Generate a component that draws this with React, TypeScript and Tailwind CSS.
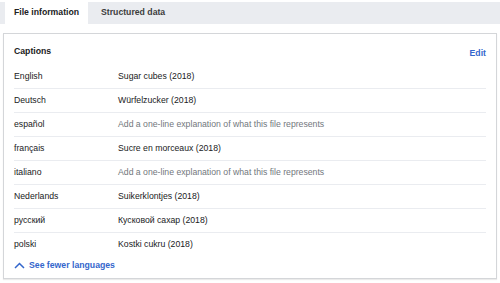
import React from "react";

const rows: { lang: string; text: string; empty?: boolean }[] = [
  { lang: "English", text: "Sugar cubes (2018)" },
  { lang: "Deutsch", text: "Würfelzucker (2018)" },
  { lang: "español", text: "Add a one-line explanation of what this file represents", empty: true },
  { lang: "français", text: "Sucre en morceaux (2018)" },
  { lang: "italiano", text: "Add a one-line explanation of what this file represents", empty: true },
  { lang: "Nederlands", text: "Suikerklontjes (2018)" },
  { lang: "русский", text: "Кусковой сахар (2018)" },
  { lang: "polski", text: "Kostki cukru (2018)" },
];

export default function App() {
  return (
    <div className="w-[500px] h-[283px] bg-white overflow-hidden font-['Liberation_Sans',Arial,sans-serif] text-[8.7px] text-[#202122]">
      {/* tabs */}
      <div className="mt-[2px] h-[22px] bg-[#eaecf0] flex pl-[5px]">
        <div className="w-[83px] bg-white flex items-center justify-center font-bold">File information</div>
        <div className="flex items-center pl-[13px] font-bold text-[#3c3c3c]">Structured data</div>
      </div>

      <div className="mt-[9px] mx-[3px] h-[246px] border border-[#d4d6d9] shadow-[0_1px_1px_rgba(0,0,0,0.08)] flex flex-col px-[10px]">
        <div className="h-[31px] flex items-end justify-between pb-[7px]">
          <span className="font-bold">Captions</span>
          <span className="font-bold text-[#3366cc] -mb-[2px]">Edit</span>
        </div>
        {rows.map((r, i) => (
          <div
            key={r.lang}
            className={
              i < rows.length - 1
                ? "h-[24px] flex items-center pt-[1px] border-b border-[#eaecf0]"
                : "h-[22px] flex items-center pt-[1px]"
            }
          >
            <span className="w-[104px] shrink-0">{r.lang}</span>
            <span className={r.empty ? "text-[#72777d]" : ""}>{r.text}</span>
          </div>
        ))}
        <div className="h-[20px] flex items-center gap-[4px] pt-[1px] text-[#3366cc] font-bold">
          <svg width="11" height="7" viewBox="0 0 11 7" fill="none">
            <path d="M1 6L5.5 1.5L10 6" stroke="#3366cc" strokeWidth="1.5" />
          </svg>
          <span>See fewer languages</span>
        </div>
      </div>
    </div>
  );
}
